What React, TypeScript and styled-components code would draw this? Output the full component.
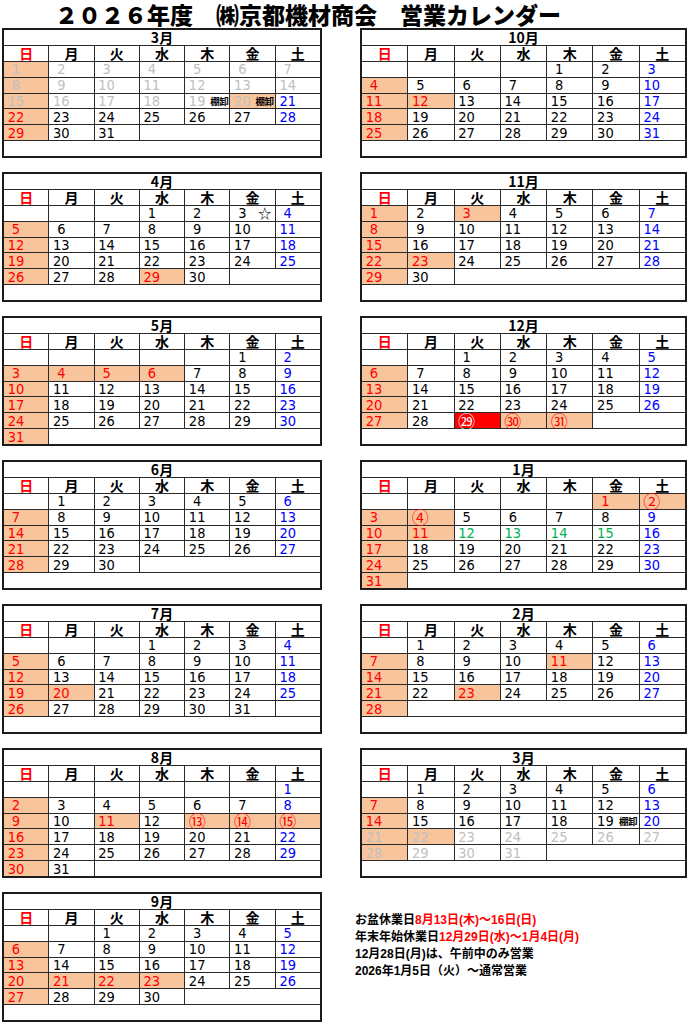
import React from 'react';
import styled, { createGlobalStyle } from 'styled-components';

const GlobalStyle = createGlobalStyle`
  html, body { margin: 0; padding: 0; background: #ffffff; }
  body { font-family: "Noto Sans CJK JP", "Liberation Sans", sans-serif; color: #000; }
`;

type Tone = 'black' | 'red' | 'blue' | 'gray' | 'green' | 'white';
type Fill = 'none' | 'peach' | 'red';
interface DayInfo { tone: Tone; fill: Fill; circled?: boolean; label?: string; }
interface MonthSpec { year: number; month: number; overrides?: Record<number, Partial<DayInfo>>; }

const TONES: Record<Tone, string> = {
  black: '#000000',
  red: '#ff0000',
  blue: '#0000ff',
  gray: '#c0c0c0',
  green: '#00b050',
  white: '#ffffff',
};
const FILLS: Record<Fill, string> = { none: '#ffffff', peach: '#f8c49c', red: '#ff0000' };

const hol: Partial<DayInfo> = { tone: 'red', fill: 'peach' };
const circ: Partial<DayInfo> = { tone: 'red', fill: 'peach', circled: true };
const range = (a: number, b: number, v: Partial<DayInfo>) => {
  const o: Record<number, Partial<DayInfo>> = {};
  for (let i = a; i <= b; i++) o[i] = { ...v };
  return o;
};

const LEFT: MonthSpec[] = [
  { year: 2026, month: 3, overrides: { ...range(1, 20, { tone: 'gray' }), 19: { tone: 'gray', label: '棚卸' }, 20: { tone: 'gray', fill: 'peach', label: '棚卸' } } },
  { year: 2026, month: 4, overrides: { 3: { label: '☆' }, 29: hol } },
  { year: 2026, month: 5, overrides: { 4: hol, 5: hol, 6: hol } },
  { year: 2026, month: 6 },
  { year: 2026, month: 7, overrides: { 20: hol } },
  { year: 2026, month: 8, overrides: { 11: hol, 13: circ, 14: circ, 15: circ } },
  { year: 2026, month: 9, overrides: { 21: hol, 22: hol, 23: hol } },
];

const RIGHT: MonthSpec[] = [
  { year: 2026, month: 10, overrides: { 12: hol } },
  { year: 2026, month: 11, overrides: { 3: hol, 23: hol } },
  { year: 2026, month: 12, overrides: { 29: { tone: 'white', fill: 'red', circled: true }, 30: circ, 31: circ } },
  { year: 2027, month: 1, overrides: { 1: hol, 2: circ, 4: circ, 11: hol, ...range(12, 15, { tone: 'green' }) } },
  { year: 2027, month: 2, overrides: { 11: hol, 23: hol } },
  { year: 2027, month: 3, overrides: { 19: { label: '棚卸' }, ...range(21, 31, { tone: 'gray' }), 22: { tone: 'gray', fill: 'peach' } } },
];

const WEEKDAYS = ['日', '月', '火', '水', '木', '金', '土'];

const circledChar = (n: number) =>
  n <= 20 ? String.fromCharCode(0x2460 + n - 1) : String.fromCharCode(0x3251 + n - 21);

/* ---------- styled parts ---------- */

const Page = styled.div`
  width: 687px;
`;

const Title = styled.h1`
  margin: 0;
  padding-left: 55px;
  font-family: "Noto Sans CJK JP", sans-serif;
  font-weight: 900;
  font-size: 23px;
  line-height: 28px;
  white-space: pre;
`;

const Columns = styled.div`
  display: flex;
  padding-left: 2px;
  gap: 38px;
`;

const Column = styled.div<{ $w: number }>`
  width: ${(p) => p.$w}px;
  display: flex;
  flex-direction: column;
  gap: 14px;
`;

const Calendar = styled.div`
  box-sizing: border-box;
  height: 130px;
  display: grid;
  grid-template-columns: repeat(7, 1fr);
  grid-template-rows: repeat(8, 1fr);
  gap: 1px;
  border: 2px solid #1c1c1c;
  background: #2a2a2a;
`;

const Cell = styled.div`
  background: #ffffff;
  display: flex;
  align-items: center;
  min-width: 0;
  line-height: 14px;
`;

const MonthCell = styled(Cell)`
  grid-column: span 7;
  justify-content: center;
  font-weight: 700;
  font-size: 14px;
`;

const HeadCell = styled(Cell)<{ $red: boolean }>`
  justify-content: center;
  font-weight: 700;
  font-size: 14px;
  color: ${(p) => (p.$red ? '#ff0000' : '#000')};
`;

const BlankCell = styled(Cell)<{ $span: number }>`
  grid-column: span ${(p) => p.$span};
`;

const DayCell = styled(Cell)<{ $fill: Fill }>`
  background: ${(p) => FILLS[p.$fill]};
`;

const Num = styled.span<{ $tone: Tone; $circled: boolean }>`
  width: 24px;
  flex: none;
  text-align: center;
  color: ${(p) => TONES[p.$tone]};
  font-family: ${(p) =>
    p.$circled ? '"Noto Sans CJK JP", sans-serif' : '"Liberation Sans Narrow", "DejaVu Sans Condensed", sans-serif'};
  font-size: ${(p) => (p.$circled ? '17px' : '14.5px')};
`;

const Label = styled.span<{ $star: boolean }>`
  flex: 1;
  text-align: center;
  font-family: "Noto Sans CJK JP", sans-serif;
  font-weight: ${(p) => (p.$star ? 400 : 700)};
  font-size: ${(p) => (p.$star ? '13px' : '9.5px')};
  letter-spacing: -0.5px;
  white-space: nowrap;
`;

const Notes = styled.div`
  margin-top: 20px;
  margin-left: -5px;
  font-family: "Liberation Sans", "Noto Sans CJK JP", sans-serif;
  font-weight: 700;
  font-size: 12px;
  line-height: 17px;
`;

const NoteLine = styled.div`
  white-space: nowrap;
`;

const Red = styled.span`
  color: #ff0000;
`;

/* ---------- components ---------- */

function dayInfo(spec: MonthSpec, d: number): DayInfo {
  const dow = new Date(spec.year, spec.month - 1, d).getDay();
  const base: DayInfo =
    dow === 0 ? { tone: 'red', fill: 'peach' } : dow === 6 ? { tone: 'blue', fill: 'none' } : { tone: 'black', fill: 'none' };
  return { ...base, ...(spec.overrides?.[d] || {}) };
}

const MonthCalendar: React.FC<{ spec: MonthSpec }> = ({ spec }) => {
  const first = new Date(spec.year, spec.month - 1, 1).getDay();
  const last = new Date(spec.year, spec.month, 0).getDate();
  const cells: React.ReactNode[] = [];
  let day = 1;
  for (let w = 0; w < 6; w++) {
    if (day > last) {
      cells.push(<BlankCell key={`b${w}`} $span={7} />);
      continue;
    }
    for (let c = 0; c < 7; c++) {
      if (w === 0 && c < first) {
        cells.push(<BlankCell key={`l${c}`} $span={1} />);
        continue;
      }
      if (day > last) {
        cells.push(<BlankCell key={`t${w}`} $span={7 - c} />);
        break;
      }
      const info = dayInfo(spec, day);
      cells.push(
        <DayCell key={`d${day}`} $fill={info.fill}>
          <Num $tone={info.tone} $circled={!!info.circled}>
            {info.circled ? circledChar(day) : day}
          </Num>
          {info.label && <Label $star={info.label === '☆'}>{info.label}</Label>}
        </DayCell>
      );
      day++;
    }
  }
  return (
    <Calendar>
      <MonthCell>{spec.month}月</MonthCell>
      {WEEKDAYS.map((w, i) => (
        <HeadCell key={w} $red={i === 0}>
          {w}
        </HeadCell>
      ))}
      {cells}
    </Calendar>
  );
};

export default function App() {
  return (
    <Page>
      <GlobalStyle />
      <Title>{'２０２６年度　㈱京都機材商会　営業カレンダー'}</Title>
      <Columns>
        <Column $w={320}>
          {LEFT.map((s) => (
            <MonthCalendar key={`${s.year}-${s.month}`} spec={s} />
          ))}
        </Column>
        <Column $w={327}>
          {RIGHT.map((s) => (
            <MonthCalendar key={`${s.year}-${s.month}`} spec={s} />
          ))}
          <Notes>
            <NoteLine>
              お盆休業日<Red>8月13日(木)～16日(日)</Red>
            </NoteLine>
            <NoteLine>
              年末年始休業日<Red>12月29日(水)～1月4日(月)</Red>
            </NoteLine>
            <NoteLine>12月28日(月)は、午前中のみ営業</NoteLine>
            <NoteLine>2026年1月5日（火）～通常営業</NoteLine>
          </Notes>
        </Column>
      </Columns>
    </Page>
  );
}
